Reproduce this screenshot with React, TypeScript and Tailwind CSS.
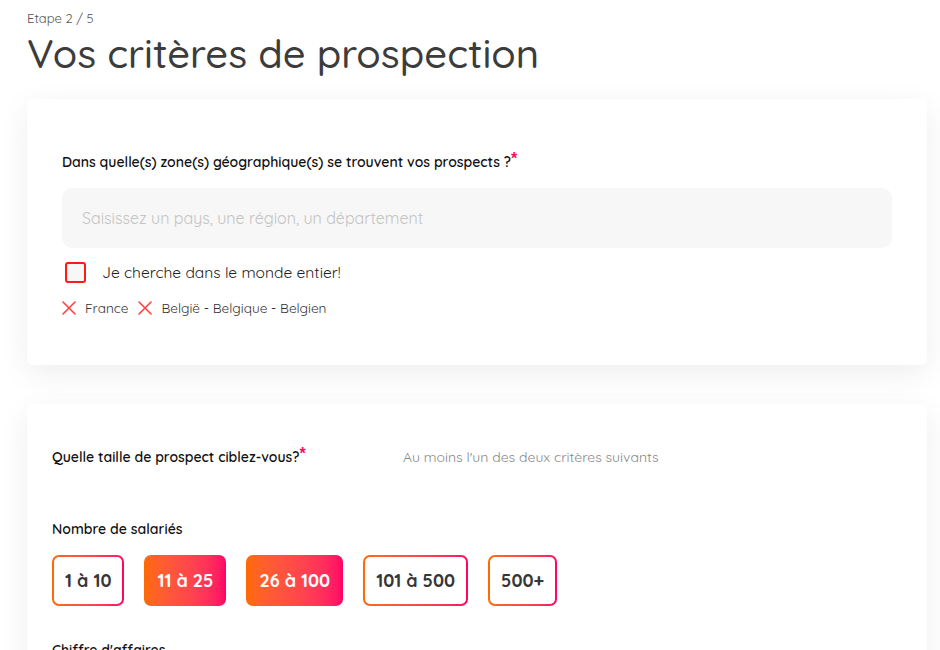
import React from "react";

const font = { fontFamily: "Quicksand, Lato, 'Noto Sans', sans-serif" };

function SizeButton({ label, active }: { label: string; active?: boolean }) {
  return (
    <div className="rounded-[7px] bg-gradient-to-r from-[#ff6a00] to-[#ff0066] p-[2px]">
      <div
        className={
          "flex h-[47px] items-center rounded-[5px] px-[11px] text-[18px] font-bold " +
          (active ? "bg-transparent text-white" : "bg-white text-[#363636]")
        }
      >
        {label}
      </div>
    </div>
  );
}

function XIcon() {
  return (
    <svg width="14" height="14" viewBox="0 0 14 14" className="shrink-0">
      <path d="M1 1 L13 13 M13 1 L1 13" stroke="#ff4040" strokeWidth="1.6" strokeLinecap="round" />
    </svg>
  );
}

function Star() {
  return (
    <span
      className="relative -top-[3px] text-[16px] leading-[0] font-bold text-[#ff0a5c]"
      style={{ fontFamily: "'Liberation Sans', sans-serif" }}
    >
      *
    </span>
  );
}

export default function App() {
  return (
    <div className="min-h-[650px] bg-white pl-[27px] pt-[9px]" style={font}>
      <div className="text-[13px] leading-[18px] text-[#555]">Etape 2 / 5</div>
      <h1 className="mt-[2px] text-[40px] leading-[48px] font-medium text-[#3c3c3c]">
        Vos critères de prospection
      </h1>

      <div className="mt-[22px] w-[900px] rounded-[5px] bg-white px-[35px] pt-[53px] pb-[47px] shadow-[0_8px_30px_rgba(0,0,0,0.07)]">
        <div className="text-[14px] leading-[20px] font-semibold text-[#111]">
          Dans quelle(s) zone(s) géographique(s) se trouvent vos prospects ?
          <Star />
        </div>
        <div className="mt-[16px] flex h-[60px] items-center rounded-[10px] bg-[#f7f7f7] px-[20px] text-[16px] text-[#c4c4c4]">
          Saisissez un pays, une région, un département
        </div>
        <label className="mt-[13px] flex items-center gap-[16px]">
          <span className="ml-[3px] h-[21px] w-[21px] rounded-[3px] border-2 border-[#ff1a1a] bg-[#f7f7f7]" />
          <span className="text-[15.6px] text-[#222]">Je cherche dans le monde entier!</span>
        </label>
        <div className="mt-[14px] flex items-center gap-[9px] text-[13.6px] leading-[20px] text-[#333]">
          <XIcon />
          <span className="mr-[1px]">France</span>
          <XIcon />
          <span>België - Belgique - Belgien</span>
        </div>
      </div>

      <div className="mt-[39px] w-[900px] rounded-t-[5px] bg-white px-[25px] pt-[43px] pb-[20px] shadow-[0_8px_30px_rgba(0,0,0,0.07)]">
        <div className="flex items-center text-[14px] leading-[20px]">
          <div className="w-[351px] font-semibold text-[#111]">
            Quelle taille de prospect ciblez-vous?
            <Star />
          </div>
          <div className="text-[#888]">Au moins l'un des deux critères suivants</div>
        </div>
        <div className="mt-[52px] text-[14px] leading-[20px] font-semibold text-[#111]">Nombre de salariés</div>
        <div className="mt-[16px] flex gap-[20px]">
          <SizeButton label="1 à 10" />
          <SizeButton label="11 à 25" active />
          <SizeButton label="26 à 100" active />
          <SizeButton label="101 à 500" />
          <SizeButton label="500+" />
        </div>
        <div className="mt-[34px] text-[14px] leading-[20px] font-semibold text-[#111]">Chiffre d'affaires</div>
        <div className="h-[60px]" />
      </div>
    </div>
  );
}
